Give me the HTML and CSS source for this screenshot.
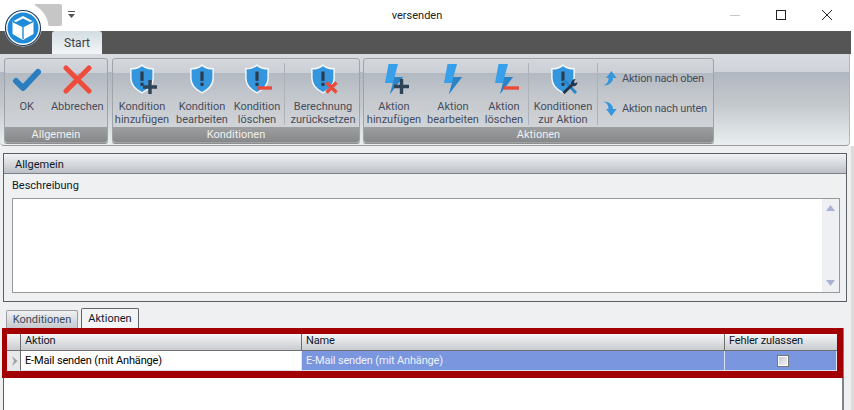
FILE: index.html
```html
<!DOCTYPE html>
<html lang="de">
<head>
<meta charset="utf-8">
<title>versenden</title>
<link rel="stylesheet" href="styles.css">
</head>
<body>
<svg class="defs" width="0" height="0">
  <symbol id="shield" viewBox="0 0 28 32">
    <path d="M14 1C10.500 4 6 5 2 5V15C2 23 8 28 14 31C20 28 26 23 26 15V5C22 5 17.500 4 14 1Z" fill="#3596de" stroke="#f4f7f9" stroke-width="1.600"/>
    <rect x="12.300" y="8" width="3.400" height="10" fill="#2b3a4e"/>
    <rect x="12.300" y="20" width="3.400" height="3.400" fill="#2b3a4e"/>
  </symbol>
  <symbol id="bolt" viewBox="0 0 18 30">
    <path d="M3.500 0H13L9.500 13H18L5 30L8 19H0Z" fill="#38a0ea"/>
    <path d="M9.500 13H18L5 30L8 19Z" fill="#2b82c4"/>
  </symbol>
</svg>
<div class="app">
  <header class="titlebar">
    <div class="qat-block"></div>
    <svg class="qat-arrow" width="7" height="7" viewBox="0 0 7 7"><rect width="7" height="1" fill="#555"/><path d="M0 3H7L3.500 7Z" fill="#555"/></svg>
    <div class="title">versenden</div>
    <div class="winctl">
      <svg width="12" height="12" viewBox="0 0 12 12"><path d="M1 6.500H11" stroke="#c8c8c8"/></svg>
      <svg width="12" height="12" viewBox="0 0 12 12"><rect x="1.500" y="1.500" width="9" height="9" fill="none" stroke="#222"/></svg>
      <svg width="12" height="12" viewBox="0 0 12 12"><path d="M1 1L11 11M11 1L1 11" stroke="#222"/></svg>
    </div>
  </header>
  <div class="logo">
    <svg width="38" height="38" viewBox="0 0 38 38">
      <circle cx="19" cy="19" r="18.500" fill="#fff"/>
      <circle cx="19" cy="19" r="17.500" fill="none" stroke="#1d3f63" stroke-width="1.200"/>
      <circle cx="19" cy="19" r="15.500" fill="#1f8ad8"/>
      <path d="M19 7L29.500 12.500V25L19 31L8.500 25V12.500Z" fill="#fff"/>
      <path d="M19 9.500L26.500 13.300L19 17L11.500 13.300Z" fill="#1f8ad8"/>
      <path d="M19 17.500V30M19 17.500L9 12.500M19 17.500L29 12.500" stroke="#1f8ad8" stroke-width="1.400" fill="none"/>
    </svg>
  </div>
  <div class="tabbar"><div class="start-tab">Start</div></div>
  <nav class="ribbon">
    <section class="group g1">
      <div class="btns">
        <div class="btn w42">
          <svg class="ico" width="30" height="32" viewBox="0 0 30 32"><path d="M4 17L11 24L26 8" fill="none" stroke="#2b7fc0" stroke-width="6" stroke-linecap="round" stroke-linejoin="round"/></svg>
          <span>OK</span>
        </div>
        <div class="btn w60">
          <svg class="ico" width="30" height="32" viewBox="0 0 30 32"><path d="M4 4L27 27M27 4L4 27" fill="none" stroke="#ee4d3d" stroke-width="5" stroke-linecap="round"/></svg>
          <span>Abbrechen</span>
        </div>
      </div>
      <div class="glabel">Allgemein</div>
    </section>
    <section class="group g2">
      <div class="btns">
        <div class="btn w56">
          <div class="ico"><svg width="26" height="30"><use href="#shield"/></svg><svg class="badge" width="14" height="14" viewBox="0 0 14 14"><path d="M7 0V14M0 7H14" stroke="#2e4258" stroke-width="3.400"/></svg></div>
          <span>Kondition<br>hinzufügen</span>
        </div>
        <div class="btn w64">
          <div class="ico"><svg width="26" height="30"><use href="#shield"/></svg></div>
          <span>Kondition<br>bearbeiten</span>
        </div>
        <div class="btn w46">
          <div class="ico"><svg width="26" height="30"><use href="#shield"/></svg><svg class="badge" width="15" height="14" viewBox="0 0 15 14"><path d="M0 8H15" stroke="#ea4a3c" stroke-width="3.400"/></svg></div>
          <span>Kondition<br>löschen</span>
        </div>
        <div class="sep sp10"></div>
        <div class="btn w66">
          <div class="ico"><svg width="26" height="30"><use href="#shield"/></svg><svg class="badge" width="13" height="13" viewBox="0 0 13 13"><path d="M1.500 1.500L11.500 11.500M11.500 1.500L1.500 11.500" stroke="#ea4a3c" stroke-width="3.400"/></svg></div>
          <span>Berechnung<br>zurücksetzen</span>
        </div>
      </div>
      <div class="glabel">Konditionen</div>
    </section>
    <section class="group g3">
      <div class="btns">
        <div class="btn w56">
          <div class="ico bolt"><svg width="18" height="30"><use href="#bolt"/></svg><svg class="badge" width="15" height="15" viewBox="0 0 15 15"><path d="M7.500 0V15M0 7.500H15" stroke="#2e4258" stroke-width="3.400"/></svg></div>
          <span>Aktion<br>hinzufügen</span>
        </div>
        <div class="btn w62">
          <div class="ico bolt"><svg width="18" height="30"><use href="#bolt"/></svg></div>
          <span>Aktion<br>bearbeiten</span>
        </div>
        <div class="btn w40">
          <div class="ico bolt"><svg width="18" height="30"><use href="#bolt"/></svg><svg class="badge" width="15" height="14" viewBox="0 0 15 14"><path d="M0 8H15" stroke="#ea4a3c" stroke-width="3.400"/></svg></div>
          <span>Aktion<br>löschen</span>
        </div>
        <div class="sep sp4"></div>
        <div class="btn w68">
          <div class="ico"><svg width="26" height="30"><use href="#shield"/></svg><svg class="badge" width="16" height="15" viewBox="0 0 16 15"><path d="M2 1L14 14" stroke="#2b82c4" stroke-width="2.800"/><path d="M1.500 14L11 5" stroke="#24344a" stroke-width="3"/><path d="M9 5C9 2 11 0 13.500 0L12 3L13 4.500L15.500 3C15.500 6 13 8 10.500 7Z" fill="#24344a"/></svg></div>
          <span>Konditionen<br>zur Aktion</span>
        </div>
        <div class="sep"></div>
        <div class="small-list">
          <div class="small-btn">
            <svg width="15" height="15" viewBox="0 0 15 15"><path d="M1 14C4.500 14 6.500 11 6.500 7H4L9.500 0L14.500 7H11C11 11.500 6 15.500 1 14Z" fill="#3596de"/></svg>
            <span>Aktion nach oben</span>
          </div>
          <div class="small-btn">
            <svg width="15" height="15" viewBox="0 0 15 15"><path d="M1 1C4.500 1 6.500 4 6.500 8H4L9.500 15L14.500 8H11C11 3.500 6 -0.500 1 1Z" fill="#3596de"/></svg>
            <span>Aktion nach unten</span>
          </div>
        </div>
      </div>
      <div class="glabel">Aktionen</div>
    </section>
  </nav>
  <main class="content">
    <section class="panel">
      <div class="panel-head">Allgemein</div>
      <div class="panel-body">
        <label class="field-label">Beschreibung</label>
        <div class="memo">
          <div class="scroll">
            <svg width="9" height="6" viewBox="0 0 9 6"><path d="M0 6H9L4.500 0Z" fill="#aab2d0"/></svg>
            <svg width="9" height="6" viewBox="0 0 9 6"><path d="M0 0H9L4.500 6Z" fill="#aab2d0"/></svg>
          </div>
        </div>
      </div>
    </section>
    <div class="tabs">
      <div class="tab">Konditionen</div>
      <div class="tab active">Aktionen</div>
    </div>
    <section class="sheet">
      <div class="highlight">
        <div class="grid head">
          <div class="cell ind"></div>
          <div class="cell">Aktion</div>
          <div class="cell">Name</div>
          <div class="cell">Fehler zulassen</div>
        </div>
        <div class="grid row">
          <div class="cell ind"><svg width="7" height="10" viewBox="0 0 7 10"><path d="M1 0L6.500 5L1 10L3 5Z" fill="#a0a0a0"/></svg></div>
          <div class="cell first">E-Mail senden (mit Anhänge)</div>
          <div class="cell sel">E-Mail senden (mit Anhänge)</div>
          <div class="cell sel check"><span class="box"></span></div>
        </div>
      </div>
    </section>
  </main>
</div>
</body>
</html>
```
FILE: styles.css
```css
* { box-sizing: border-box; }
html, body { margin: 0; height: 410px; overflow: hidden; background: #fff; }
body { font: 11px/13px Roboto, "Open Sans", sans-serif; color: #10182a; }
.defs { position: absolute; }
.app { width: 854px; height: 410px; position: relative; overflow: hidden; }

.titlebar { height: 31px; background: #fff; display: flex; align-items: center; position: relative; }
.qat-block { position: absolute; left: 35px; top: 4px; width: 27px; height: 22px; background: radial-gradient(circle at -12px 24px, #fff 25px, #c6c6c6 26px); border-radius: 0 2px 2px 0; }
.qat-arrow { position: absolute; left: 68px; top: 11px; }
.title { flex: 1; text-align: center; font-size: 11px; color: #222; padding-right: 20px; }
.winctl { position: absolute; right: 0; top: 9px; display: flex; gap: 34px; padding-right: 21px; }

.logo { position: absolute; left: 4px; top: 9px; z-index: 3; line-height: 0; }

.tabbar { width: 851px; height: 23px; background: #555; padding-left: 52px; }
.start-tab { width: 50px; height: 23px; padding-top: 6px; text-align: center; font-size: 12px; color: #3a3f48; background: linear-gradient(#d3dde2, #f2f6f7); border-radius: 3px 3px 0 0; }

.ribbon { width: 850px; height: 92px; padding: 4px 0 0 4px; display: flex; gap: 4px; background: linear-gradient(#d9dce1 0, #d0d3d9 18px, #b1b7c0 18px, #c3c8cd 50px, #e9eff0 100%); border-radius: 0 0 4px 4px; border-bottom: 1px solid #9b9b9b; border-right: 1px solid #b5b5b5; }
.group { height: 85px; display: flex; flex-direction: column; border: 1px solid #a0a3a8; border-radius: 3px; background: linear-gradient(#d4d7dc 0, #ccd0d6 14px, #b3b9c2 14px, #c5c9ce 40px, #d6dadd 100%); box-shadow: 0 1px 0 #8e8e8e; }
.g1 { width: 104px; }
.g2 { width: 248px; margin-right: -1px; }
.g3 { width: 351px; }
.btns { flex: 1; display: flex; padding-left: 1px; }
.g3 .btns { padding-left: 2px; }
.glabel { height: 15px; text-align: center; line-height: 15px; color: #eef0f0; background: linear-gradient(#9d9e9f, #878889); border-radius: 0 0 2px 2px; }

.btn { display: flex; flex-direction: column; align-items: center; white-space: nowrap; color: #474d5c; padding-top: 5px; text-align: center; }
.btn span { display: block; margin-top: 4px; }
.w40 { width: 40px; }
.w42 { width: 42px; }
.w46 { width: 46px; }
.w56 { width: 56px; }
.w60 { width: 60px; }
.w62 { width: 62px; }
.w64 { width: 64px; }
.w66 { width: 66px; }
.w68 { width: 68px; }
.ico { display: block; position: relative; height: 32px; line-height: 0; }
.badge { position: absolute; right: -2px; bottom: 2px; }
.bolt .badge { right: -6px; }
.sep { width: 1px; height: 62px; margin-top: 4px; background: #aeb2b8; }
.sp10 { margin: 4px 5px 0 4px; }
.sp4 { margin-left: 4px; }
.small-list { display: flex; flex-direction: column; gap: 14px; padding: 11px 0 0 4px; color: #474d5c; white-space: nowrap; letter-spacing: -0.2px; }
.small-btn { display: flex; align-items: center; gap: 5px; height: 16px; }

.content { height: 264px; background: #eef0f2; padding: 7px 4px 0 3px; border-right: 3px solid #dcdcdc; }
.panel { height: 149px; border: 1px solid #5a5f66; }
.panel-head { height: 20px; padding: 4px 0 0 11px; background: linear-gradient(#f2f3f5, #bcc0c6); border-bottom: 1px solid #7a7f88; }
.panel-body { padding: 5px 6px 0 8px; }
.field-label { display: block; height: 19px; }
.memo { height: 95px; background: #fff; border: 1px solid #999; display: flex; justify-content: flex-end; }
.scroll { width: 17px; background: #eff0f3; display: flex; flex-direction: column; align-items: center; justify-content: space-between; padding: 6px 0 6px; line-height: 0; }

.tabs { display: flex; align-items: flex-end; gap: 3px; height: 26px; padding-left: 3px; }
.tab { width: 72px; height: 18px; text-align: center; padding-top: 2px; color: #3b4a5c; background: linear-gradient(#f0f1f3, #c6c9cd); border: 1px solid #9a9ea3; border-bottom: 0; border-radius: 2px 2px 0 0; }
.tab.active { width: 58px; height: 20px; background: #f3f4f6; color: #10182a; border-color: #60656c; padding-top: 3px; }
.sheet { height: 82px; margin-right: 3px; background: #fff; border-left: 1px solid #5a5f66; border-right: 2px solid #808488; position: relative; }
.highlight { position: absolute; left: -2px; top: 0; width: 841px; height: 50px; border: solid #a20000; border-width: 6px 6px 7px 5px; background: #fff; }
.grid { display: grid; grid-template-columns: 14px 281px 423px 1fr; letter-spacing: -0.15px; }
.head { height: 17px; background: linear-gradient(#f4f5f6, #c9ccd0); border-bottom: 1px solid #6e6e6e; }
.head .cell { border-right: 1px solid #6e6e6e; padding: 0 0 3px 4px; line-height: 13px; }
.head .cell:last-child { border-right: 0; }
.row { height: 20px; }
.cell { display: flex; align-items: center; white-space: nowrap; }
.row .cell { padding-left: 4px; border-right: 1px solid #dfe3ee; border-bottom: 1px solid #dfe3ee; color: #000; }
.row .ind { background: #e6e8ea; border-right: 1px solid #6e6e6e; }
.row .sel { background: #7a96de; color: #eef2fb; }
.row .check { justify-content: center; padding-left: 4px; }
.box { width: 12px; height: 12px; border: 1px solid #777; background: linear-gradient(135deg, #c3c8d0, #f4f5f6); box-shadow: inset 0 0 0 1px #fff; }
```
